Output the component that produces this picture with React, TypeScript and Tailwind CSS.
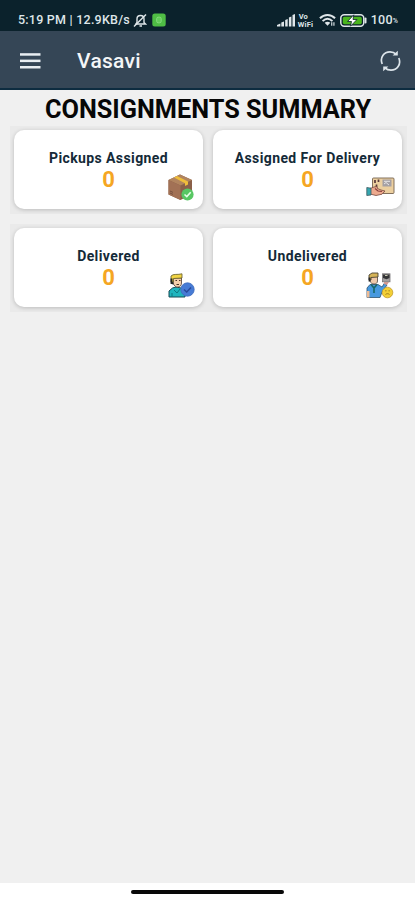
import React from "react";

function StatusBar() {
  return (
    <div className="flex h-[31px] items-center bg-[#0b222c] pr-[17px] pl-[18px] pt-[9px] text-[12px] font-medium text-[#dfe6e9]">
      <span className="w-[115px] text-[12.5px] whitespace-nowrap tracking-[0.23px]">5:19 PM | 12.9KB/s</span>
      <svg className="h-[15px] w-[14px]" viewBox="0 0 14 15" fill="none" stroke="#dfe6e9" strokeWidth="1.4">
        <path d="M3 11 L4 9.5 V6 C4 3.5 5.5 2.5 7.5 2.5 C10 2.5 11 4 11 6 V9.5 L12.5 11 Z M6.5 13 H9" />
        <path d="M1 13.5 L13 1.5" />
      </svg>
      <svg className="ml-[5px] h-[14px] w-[14px]" viewBox="0 0 14 14">
        <rect x="0.3" y="0.5" width="13.4" height="13" rx="2.5" fill="#4fbd45" />
        <rect x="4.7" y="4.2" width="4.5" height="5.6" rx="1.5" fill="#62cc58" stroke="#8add82" strokeWidth="0.9" />
      </svg>
      <div className="ml-auto flex items-center">
        <svg className="h-[13px] w-[19px]" viewBox="0 0 19 13" fill="#dfe6e9">
          <path d="M0 12.5 V11 L3.4 9.5 V12.5 Z M4.3 12.5 V8.5 L7 7.5 V12.5 Z M8.2 12.5 V6 L10.7 5 V12.5 Z M11.9 12.5 V3.5 L14.4 2.5 V12.5 Z M15.5 12.5 V1 L18 0 V12.5 Z" />
        </svg>
        <div className="ml-[2px] flex w-[17px] flex-col gap-[1px] text-[7.5px] font-bold">
          <span className="h-[7px] pl-[1px] leading-[7px]">Vo</span>
          <span className="h-[7px] leading-[7px] tracking-[0.2px]">WiFi</span>
        </div>
        <svg className="ml-[4px] h-[14px] w-[17px]" viewBox="0 0 18 14" fill="none" stroke="#dfe6e9" strokeWidth="2.1">
          <path d="M1 5.2 C5.5 0.6 12.5 0.6 17 5.2 M3.8 8.2 C7 5 11 5 14.2 8.2" />
          <path d="M6 10 C8 8.6 10 8.6 12 10 L9 13 Z" fill="#dfe6e9" stroke="none" />
          <path d="M13.5 9.5 V13 M15.8 9.5 V13" strokeWidth="1.2" />
        </svg>
        <svg className="ml-[4px] h-[13px] w-[27px]" viewBox="0 0 27 13">
          <rect x="0.8" y="0.8" width="23" height="11.4" rx="3.4" fill="#0b222c" stroke="#dfe6e9" strokeWidth="1.5" />
          <rect x="2.8" y="2.8" width="19" height="7.4" rx="1.6" fill="#49b51d" />
          <rect x="24.6" y="3.5" width="1.9" height="6" rx="0.9" fill="#dfe6e9" />
          <path d="M13.8 0.8 L7.5 7.5 H11.5 L10.5 12.2 L17 5.5 H13 Z" fill="#fff" stroke="#0b222c" strokeWidth="0.8" />
        </svg>
        <span className="ml-[4px] text-[12.5px] tracking-[0.25px]">100</span>
        <span className="pt-[3px] text-[7px]">%</span>
      </div>
    </div>
  );
}

function Toolbar() {
  return (
    <div className="flex h-[59px] items-center border-b-2 border-[#0d2c40] bg-[#354656] pr-[14px] pl-[20px]">
      <svg className="mt-[2px] h-[16px] w-[21px]" viewBox="0 0 21 16" fill="#e9eef2">
        <rect y="0.2" width="20.5" height="2.5" />
        <rect y="6.6" width="20.5" height="2.5" />
        <rect y="13" width="20.5" height="2.5" />
      </svg>
      <h1 className="ml-[36px] pt-[5px] text-[21px] font-medium tracking-[0.3px] text-[#f4f6f8]">Vasavi</h1>
      <svg className="mt-[2px] ml-auto h-[22px] w-[21px]" viewBox="0 0 21 22" fill="none" stroke="#dce4ea" strokeWidth="1.7">
        <path d="M2.2 14 C-0.5 7.5 4 1.9 10 1.9 C12.5 1.9 14.5 2.7 16 4.2" />
        <path d="M18.8 8 C21.5 14.5 17 20.1 11 20.1 C8.5 20.1 6.5 19.3 5 17.8" />
        <path d="M17.8 0.8 V5.6 H12.6 Z M3.2 21.2 V16.4 H8.4 Z" fill="#dce4ea" stroke="none" />
      </svg>
    </div>
  );
}

function PackageIcon() {
  return (
    <svg className="h-[28px] w-[27px]" viewBox="0 0 27 28">
      <path d="M0.5 6 L12 0.5 L24 6 V20 L12.5 26 L0.5 20.5 Z" fill="#8a6049" />
      <path d="M0.5 6 L12 0.5 L24 6 L12.5 11.5 Z" fill="#b1845f" />
      <path d="M0.5 6 L12.5 11.5 V26 L0.5 20.5 Z" fill="#a27155" />
      <path d="M6 3.4 L9 2 L20 7.6 V10.5 L17 12 V9.2 Z" fill="#efbd3b" />
      <path d="M2 17 L5 18.4 M2 19 L5 20.4" stroke="#765140" />
      <circle cx="19.5" cy="20.5" r="6.1" fill="#58c763" />
      <path d="M16.5 20.5 L18.8 22.6 L22.7 18.3" fill="none" stroke="#e7ffe8" strokeWidth="1.6" />
    </svg>
  );
}

function HandoverIcon() {
  return (
    <svg className="h-[20px] w-[29px]" viewBox="0 0 29 20">
      <rect x="6.5" y="1" width="21.5" height="15.5" rx="1" fill="#eccf9f" stroke="#756250" strokeWidth="0.9" />
      <rect x="16.5" y="2.5" width="9" height="7" fill="#a5a0a4" />
      <path d="M18 4.3 H24 M18 7 L20 5.5 L23 8" stroke="#e9e6e7" strokeWidth="1" fill="none" />
      <path d="M9 3 V6 M12.5 2.5 V5 M10.5 7.5 V10.5" stroke="#59383a" strokeWidth="1.7" />
      <path d="M4 11.5 L8 10 L11 9.5 L11.5 11.5 L15 13 L19 14 L16 17.2 L10 18.5 L4 17 Z" fill="#edaa8e" stroke="#76473e" strokeWidth="0.8" />
      <path d="M9 11.5 L12 14 L16 14.5" stroke="#883e3d" strokeWidth="1.2" fill="none" />
      <path d="M0.8 10.5 L5 11.2 V18 L0.8 18.5 Z" fill="#35a7b1" stroke="#405960" strokeWidth="0.8" />
    </svg>
  );
}

function DeliveredIcon() {
  return (
    <svg className="h-[25px] w-[27px]" viewBox="0 0 27 25">
      <path d="M1 24 V18 L4.5 15 L8 14 L13 15 L17 18 V24 Z" fill="#20b5be" stroke="#174b55" strokeWidth="1" />
      <path d="M4 5 H13.5 V10 C13.5 15 7 16 5 10 Z" fill="#f5cfab" stroke="#4a3930" strokeWidth="0.8" />
      <path d="M3 9 V3 C5 0.5 10 2 14 0.8 V5 L5.5 5.5 V9 Z" fill="#f1d443" stroke="#60592c" strokeWidth="0.8" />
      <path d="M7.5 7.5 H9 M11 7.5 H12.5 M8.5 11.5 H11" stroke="#493425" strokeWidth="1" />
      <path d="M3.5 5.5 V10 L5.5 10.5" stroke="#232523" strokeWidth="2" fill="none" />
      <path d="M4 20 V24 M6 17 L9 20 L12 16" stroke="#107780" fill="none" />
      <circle cx="19.5" cy="16.5" r="6.7" fill="#477bd5" stroke="#3d6cbd" strokeWidth="0.8" />
      <path d="M16 16.5 L18.7 19 L23 14.5" fill="none" stroke="#29499a" strokeWidth="1.5" />
    </svg>
  );
}

function UndeliveredIcon() {
  return (
    <svg className="h-[27px] w-[28px]" viewBox="0 0 28 27">
      <path d="M1 25.5 V16 L4 12.5 H12 L16 15 L18.5 11 L21 13 L16 20 L14 25.5 Z" fill="#4799df" stroke="#2d526f" strokeWidth="0.8" />
      <path d="M4 4 H11.5 V9 C11.5 13 5 13 4 9 Z" fill="#f0c9a9" stroke="#4b423e" strokeWidth="0.8" />
      <path d="M3 8 V3 L6 1 H12 V5 L5 5.5 V8 Z" fill="#d5b356" stroke="#4b4433" strokeWidth="0.9" />
      <path d="M3.5 5.5 V9.5" stroke="#252525" strokeWidth="1.8" />
      <path d="M5 12.5 L8 16 L11 12.5 M8 16 V21" stroke="#176866" strokeWidth="1.6" fill="none" />
      <path d="M1 19 H3.5 V25.5 H1 Z" fill="#eebb94" />
      <rect x="16.5" y="1.8" width="7.5" height="8" fill="#a3a0a0" stroke="#777375" strokeWidth="0.8" />
      <path d="M17 2.5 H23.5 V6 L20.5 7.2 L17 6 Z" fill="#343436" />
      <path d="M19 3.5 H21.5" stroke="#c9c9b0" />
      <path d="M18 10 L23 10 L21 13 L18 12 Z" fill="#d29a91" />
      <circle cx="21.5" cy="20.5" r="5.3" fill="#f3cf35" stroke="#c29a2c" strokeWidth="0.8" />
      <path d="M19.2 18.8 H20.5 M22.5 18.8 H23.8 M19.5 22.5 C20.7 21.4 22.3 21.4 23.5 22.5" stroke="#9d7a1c" fill="none" />
    </svg>
  );
}

const rows = [
  [
    { label: "Pickups Assigned", count: 0, icon: <PackageIcon />, pos: "right-[8px] bottom-[7px]" },
    { label: "Assigned For Delivery", count: 0, icon: <HandoverIcon />, pos: "right-[7px] bottom-[12px]" },
  ],
  [
    { label: "Delivered", count: 0, icon: <DeliveredIcon />, pos: "right-[8px] bottom-[9px]" },
    { label: "Undelivered", count: 0, icon: <UndeliveredIcon />, pos: "right-[8px] bottom-[8px]" },
  ],
];

export default function App() {
  return (
    <div className="flex h-[900px] w-[415px] flex-col overflow-hidden bg-[#f0f0f0] font-['Roboto',sans-serif]">
      <StatusBar />
      <Toolbar />
      <main className="flex-1">
        <h2 className="h-[36px] pt-[2px] pl-[1px] text-center text-[25.3px] leading-[36px] font-bold whitespace-nowrap text-[#070707]">
          CONSIGNMENTS SUMMARY
        </h2>
        <div className="flex flex-col gap-[10px]">
          {rows.map((row) => (
            <div
              key={row[0].label}
              className="mr-[8px] ml-[10px] flex h-[88px] gap-[10px] bg-[#eaeaea] px-[4px] pt-[4px]"
            >
              {row.map((item) => (
                <div
                  key={item.label}
                  className="relative flex h-[79px] w-[189px] flex-col items-center rounded-[10px] bg-white pt-[18px] shadow-[0_1px_4px_rgba(0,0,0,0.2)]"
                >
                  <span className="text-[14px] leading-[20px] font-bold tracking-[0.4px] text-[#142a38]">
                    {item.label}
                  </span>
                  <span className="text-[22px] leading-[23px] font-bold text-[#f5a623]">{item.count}</span>
                  <div className={`absolute ${item.pos}`}>{item.icon}</div>
                </div>
              ))}
            </div>
          ))}
        </div>
      </main>
      <div className="flex h-[17px] justify-center bg-white pt-[7px]">
        <div className="h-[4px] w-[153px] rounded-full bg-[#080808]" />
      </div>
    </div>
  );
}
